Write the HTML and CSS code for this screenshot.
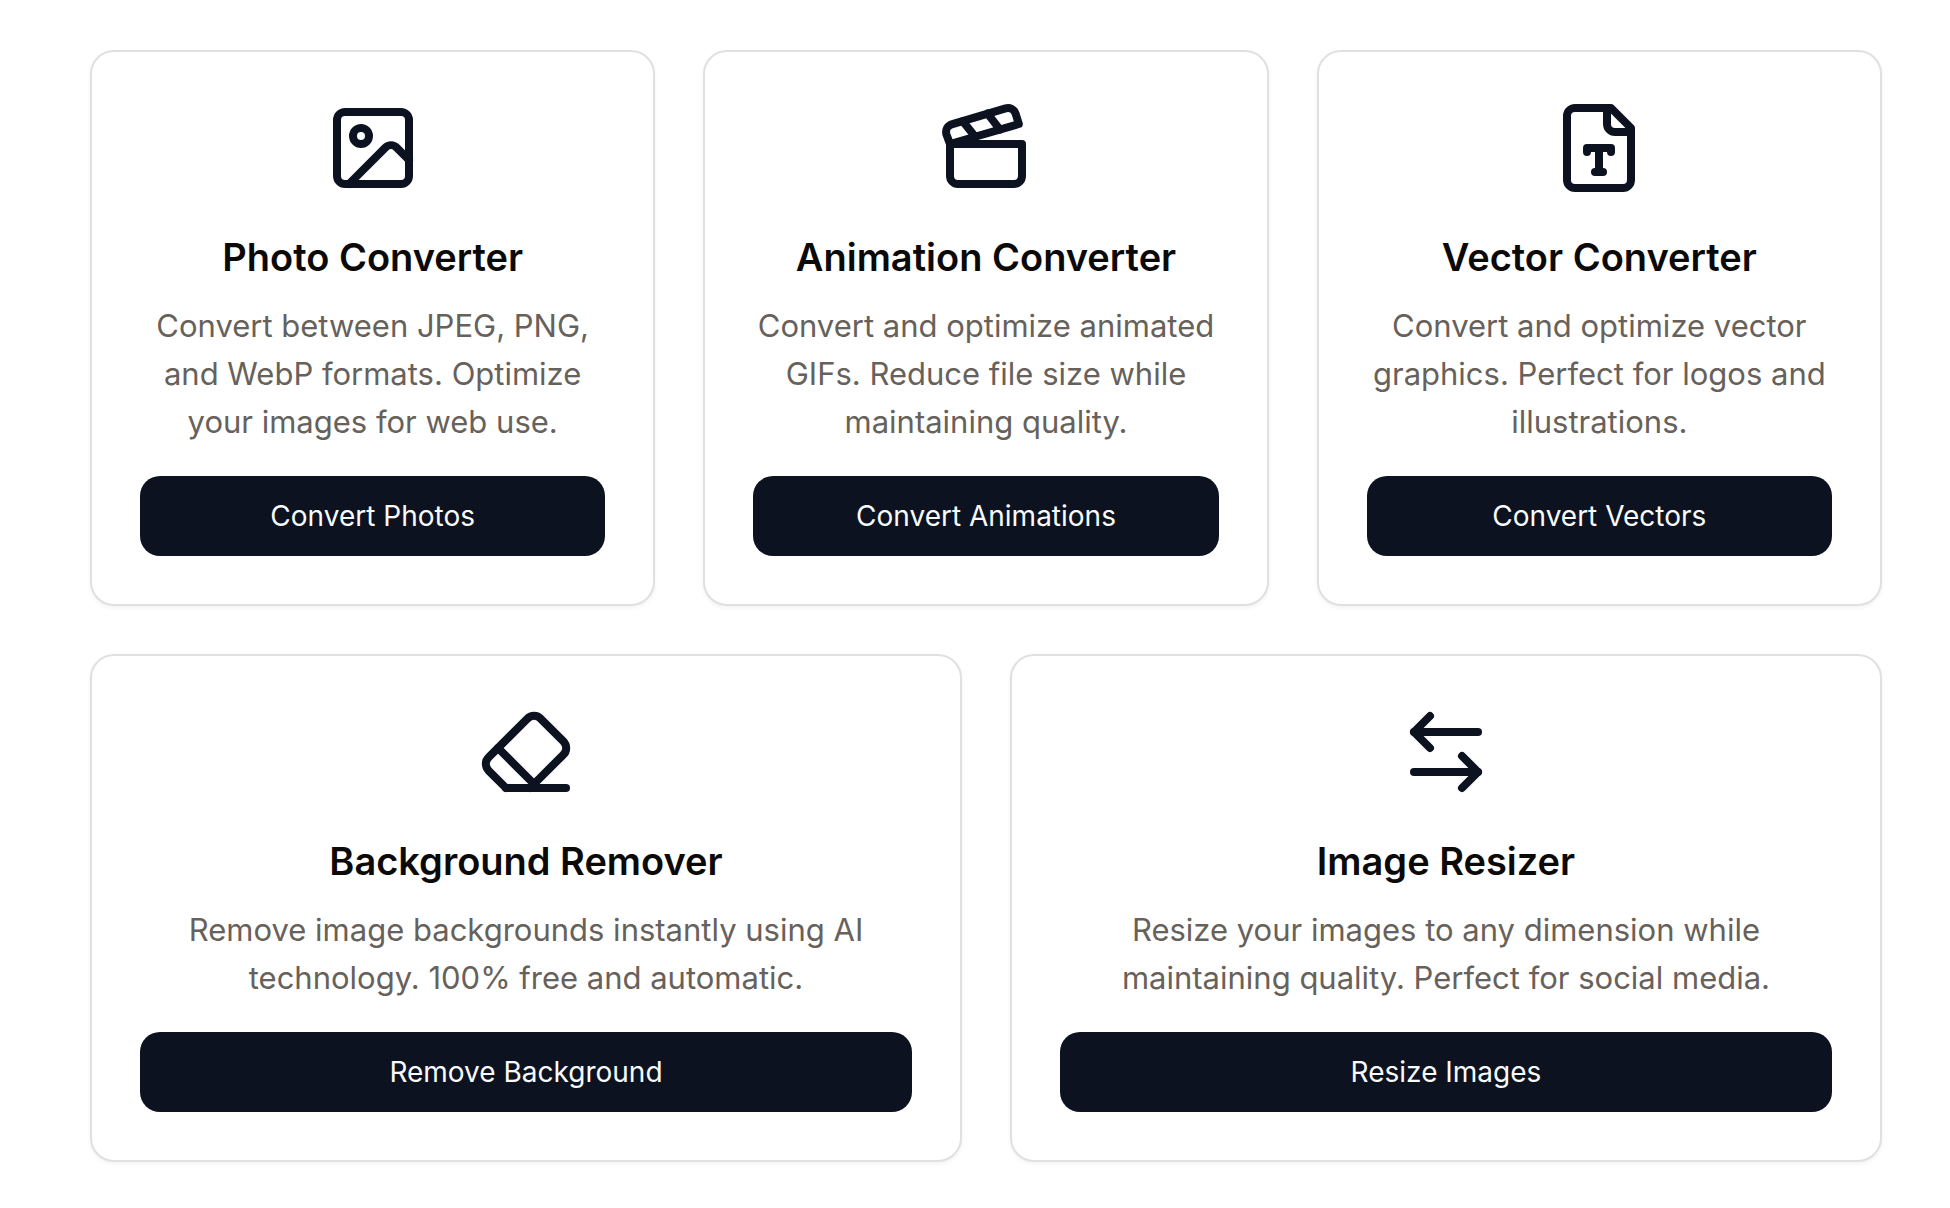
FILE: index.html
```html
<!DOCTYPE html>
<html lang="en">
<head>
  <meta charset="utf-8">
  <meta name="viewport" content="width=device-width, initial-scale=1">
  <title>Image Tools</title>
  <link rel="stylesheet" href="styles.css">
</head>
<body>
  <main class="tools">
    <article class="card">
      <svg class="icon" viewBox="0 0 24 24" aria-hidden="true">
        <rect width="18" height="18" x="3" y="3" rx="2" ry="2"/>
        <circle cx="9" cy="9" r="2"/>
        <path d="m21 15-3.086-3.086a2 2 0 0 0-2.828 0L6 21"/>
      </svg>
      <h2 class="title">Photo Converter</h2>
      <p class="description">Convert between JPEG, PNG, and WebP formats. Optimize your images for web use.</p>
      <button class="action" type="button">Convert Photos</button>
    </article>

    <article class="card">
      <svg class="icon" viewBox="0 0 24 24" aria-hidden="true">
        <path d="M20.2 6 3 11l-.9-2.4c-.3-1.1.3-2.2 1.3-2.5l13.5-4c1.1-.3 2.2.3 2.5 1.3Z"/>
        <path d="m6.2 5.3 3.1 3.9"/>
        <path d="m12.4 3.4 3.1 4"/>
        <path d="M3 11h18v8a2 2 0 0 1-2 2H5a2 2 0 0 1-2-2Z"/>
      </svg>
      <h2 class="title">Animation Converter</h2>
      <p class="description">Convert and optimize animated GIFs. Reduce file size while maintaining quality.</p>
      <button class="action" type="button">Convert Animations</button>
    </article>

    <article class="card">
      <svg class="icon" viewBox="0 0 24 24" aria-hidden="true">
        <path d="M15 2H6a2 2 0 0 0-2 2v16a2 2 0 0 0 2 2h12a2 2 0 0 0 2-2V7Z"/>
        <path d="M14 2v4a2 2 0 0 0 2 2h4"/>
        <path d="M9 13v-1h6v1"/>
        <path d="M12 12v6"/>
        <path d="M11 18h2"/>
      </svg>
      <h2 class="title">Vector Converter</h2>
      <p class="description">Convert and optimize vector graphics. Perfect for logos and illustrations.</p>
      <button class="action" type="button">Convert Vectors</button>
    </article>

    <article class="card card-wide">
      <svg class="icon" viewBox="0 0 24 24" aria-hidden="true">
        <path d="m7 21-4.3-4.3c-1-1-1-2.5 0-3.4l9.6-9.6c1-1 2.5-1 3.4 0l5.6 5.6c1 1 1 2.5 0 3.4L13 21"/>
        <path d="M22 21H7"/>
        <path d="m5 11 9 9"/>
      </svg>
      <h2 class="title">Background Remover</h2>
      <p class="description">Remove image backgrounds instantly using AI technology. 100% free and automatic.</p>
      <button class="action" type="button">Remove Background</button>
    </article>

    <article class="card card-wide">
      <svg class="icon" viewBox="0 0 24 24" aria-hidden="true">
        <path d="M8 3 4 7l4 4"/>
        <path d="M4 7h16"/>
        <path d="m16 21 4-4-4-4"/>
        <path d="M20 17H4"/>
      </svg>
      <h2 class="title">Image Resizer</h2>
      <p class="description">Resize your images to any dimension while maintaining quality. Perfect for social media.</p>
      <button class="action" type="button">Resize Images</button>
    </article>
  </main>
</body>
</html>
```
FILE: styles.css
```css
* {
  box-sizing: border-box;
  margin: 0;
}

body {
  background: #fff;
  color: #0c0a09;
  font-family: Inter, "Liberation Sans", sans-serif;
}

.tools {
  display: grid;
  grid-template-columns: repeat(6, minmax(0, 1fr));
  gap: 48px;
  padding: 50px 68px 46px 90px;
}

.card {
  grid-column: span 2;
  display: flex;
  flex-direction: column;
  align-items: center;
  padding: 48px;
  border: 2px solid #e0e0e0;
  border-radius: 24px;
  background: #fff;
  box-shadow: 0 2px 4px rgba(0, 0, 0, 0.05);
  text-align: center;
}

.card-wide {
  grid-column: span 3;
}

.icon {
  width: 96px;
  height: 96px;
  margin-bottom: 32px;
  fill: none;
  stroke: #0c121f;
  stroke-width: 2;
  stroke-linecap: round;
  stroke-linejoin: round;
}

.title {
  margin-bottom: 16px;
  font-size: 38px;
  font-weight: 600;
  line-height: 58px;
}

.description {
  margin-bottom: 30px;
  color: #67615b;
  font-size: 31px;
  line-height: 48px;
}

.action {
  width: 100%;
  height: 80px;
  margin-top: auto;
  border: 0;
  border-radius: 20px;
  background: #0c121f;
  color: #f8fafc;
  font: 400 28px/40px Inter, "Liberation Sans", sans-serif;
  cursor: pointer;
}
```
